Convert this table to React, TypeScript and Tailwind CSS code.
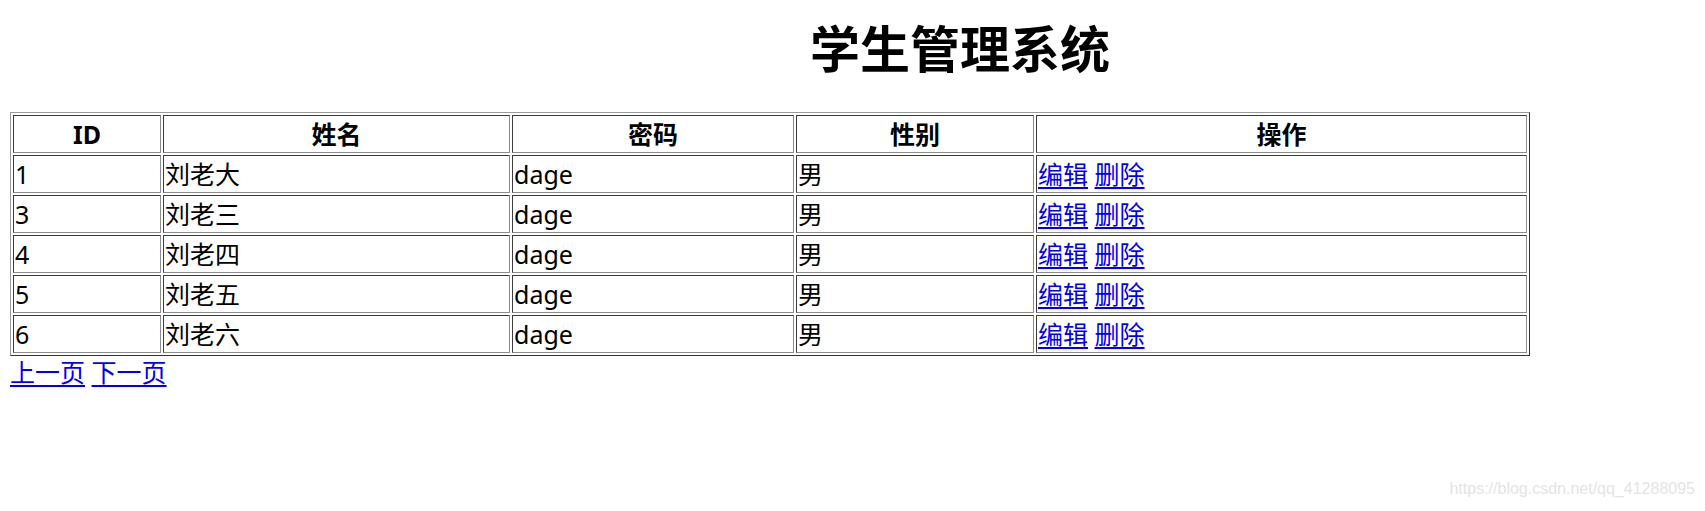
const rows = [
  { id: "1", name: "刘老大", pwd: "dage", sex: "男" },
  { id: "3", name: "刘老三", pwd: "dage", sex: "男" },
  { id: "4", name: "刘老四", pwd: "dage", sex: "男" },
  { id: "5", name: "刘老五", pwd: "dage", sex: "男" },
  { id: "6", name: "刘老六", pwd: "dage", sex: "男" },
];

const cell =
  "h-[38px] p-px border border-t-[#3c3c3c] border-l-[#3c3c3c] border-r-[#8c8c8c] border-b-[#8c8c8c] leading-[34px] align-middle";

function LinkText({ children }: { children: React.ReactNode }) {
  return <a href="#" className="text-[#0000ee] underline underline-offset-[3px]">{children}</a>;
}

export default function App() {
  return (
    <div
      className="relative h-[511px] w-full overflow-hidden bg-white px-[10px] text-black"
      style={{ fontFamily: '"Noto Sans", "Noto Sans CJK SC", sans-serif' }}
    >
      {/* Title */}
      <h1 className="mt-[19px] mb-[33px] pl-[800px] text-[50px] font-bold leading-[60px]">学生管理系统</h1>

      {/* Student table */}
      <table className="w-[1520px] table-fixed border-separate border-spacing-[2px] border border-t-[#9a9a9a] border-l-[#9a9a9a] border-r-[#333333] border-b-[#333333] text-[25px]">
        <thead>
          <tr>
            <th className={`${cell} w-[148px] text-center font-bold`}>ID</th>
            <th className={`${cell} w-[347px] text-center font-bold`}>姓名</th>
            <th className={`${cell} w-[282px] text-center font-bold`}>密码</th>
            <th className={`${cell} w-[238px] text-center font-bold`}>性别</th>
            <th className={`${cell} text-center font-bold`}>操作</th>
          </tr>
        </thead>
        <tbody>
          {rows.map((r) => (
            <tr key={r.id}>
              <td className={cell}>{r.id}</td>
              <td className={cell}>{r.name}</td>
              <td className={cell}>{r.pwd}</td>
              <td className={cell}>{r.sex}</td>
              <td className={cell}>
                <LinkText>编辑</LinkText> <LinkText>删除</LinkText>
              </td>
            </tr>
          ))}
        </tbody>
      </table>

      {/* Pagination */}
      <div className="text-[25px] leading-[33px]">
        <LinkText>上一页</LinkText> <LinkText>下一页</LinkText>
      </div>

      {/* watermark */}
      <div
        className="absolute right-[10px] bottom-[10px] text-[16px] text-[#e4e4e4]"
        style={{ fontFamily: '"Liberation Sans", Arial, sans-serif' }}
      >
        https://blog.csdn.net/qq_41288095
      </div>
    </div>
  );
}
